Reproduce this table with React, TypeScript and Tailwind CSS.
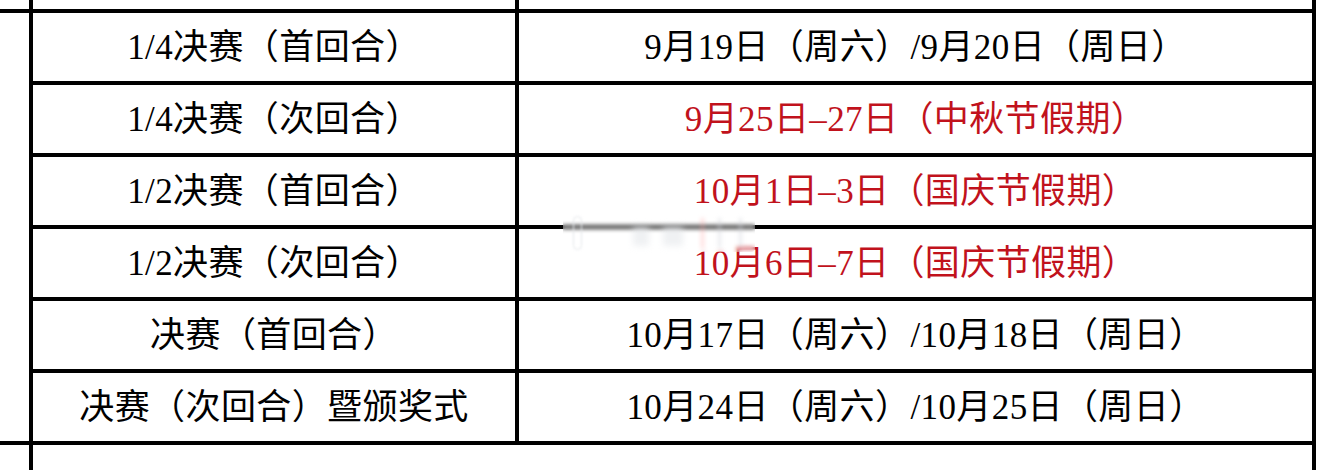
import React from "react";

type Row = { stage: string; date: string; red?: boolean };

const rows: Row[] = [
  { stage: "1/4决赛（首回合）", date: "9月19日（周六）/9月20日（周日）" },
  { stage: "1/4决赛（次回合）", date: "9月25日–27日（中秋节假期）", red: true },
  { stage: "1/2决赛（首回合）", date: "10月1日–3日（国庆节假期）", red: true },
  { stage: "1/2决赛（次回合）", date: "10月6日–7日（国庆节假期）", red: true },
  { stage: "决赛（首回合）", date: "10月17日（周六）/10月18日（周日）" },
  { stage: "决赛（次回合）暨颁奖式", date: "10月24日（周六）/10月25日（周日）" },
];

export default function App() {
  return (
    <div className="relative w-[1320px] h-[470px] overflow-hidden bg-white text-black font-['Liberation_Serif','Noto_Sans_CJK_SC',serif] text-[35px] tracking-[0.4px]">
      {/* partial row above */}
      <div className="flex h-[9px]">
        <div className="w-[29px]" />
        <div className="w-[1287px] border-x-4 border-black grid grid-cols-[486px_793px]">
          <div className="border-r-4 border-black" />
          <div />
        </div>
      </div>
      <div className="h-[4px] w-[1316px] bg-black" />

      <div className="flex">
        <div className="w-[29px]" />
        <div className="w-[1287px] border-x-4 border-black flex flex-col">
          {rows.map((r, i) => (
            <div
              key={r.stage}
              className={
                i < rows.length - 1
                  ? "grid grid-cols-[486px_793px] h-[72px] border-b-4 border-black"
                  : "grid grid-cols-[486px_793px] h-[68px]"
              }
            >
              <div className="border-r-4 border-black flex items-center justify-center pt-[1px] leading-none whitespace-nowrap">
                {r.stage}
              </div>
              <div
                className={
                  r.red
                    ? "flex items-center justify-center pt-[1px] leading-none whitespace-nowrap text-[#c1121c]"
                    : "flex items-center justify-center pt-[1px] leading-none whitespace-nowrap"
                }
              >
                {r.date}
              </div>
            </div>
          ))}
        </div>
      </div>

      <div className="h-[4px] w-[1316px] bg-black" />
      <div className="flex h-[25px]">
        <div className="w-[29px]" />
        <div className="w-[1287px] border-x-4 border-black" />
      </div>

      {/* faded watermark */}
      <div className="absolute left-[563px] top-[212px] w-[192px] h-[40px] bg-white/25 backdrop-blur-[2px] rounded-sm">
        <div className="absolute left-[10px] top-[4px] w-[9px] h-[34px] rounded-full border border-gray-200 blur-[1px]" />
        <div className="absolute left-[70px] top-[14px] w-[16px] h-[20px] bg-gray-200/60 blur-[3px]" />
        <div className="absolute left-[100px] top-[14px] w-[20px] h-[20px] bg-gray-200/60 blur-[3px]" />
        <div className="absolute left-[138px] top-[6px] w-[3px] h-[30px] bg-red-300/40 blur-[2px]" />
        <div className="absolute left-[155px] top-[6px] w-[3px] h-[30px] bg-gray-300/50 blur-[2px]" />
        <div className="absolute left-[176px] top-[6px] w-[3px] h-[30px] bg-gray-300/50 blur-[2px]" />
      </div>
    </div>
  );
}
